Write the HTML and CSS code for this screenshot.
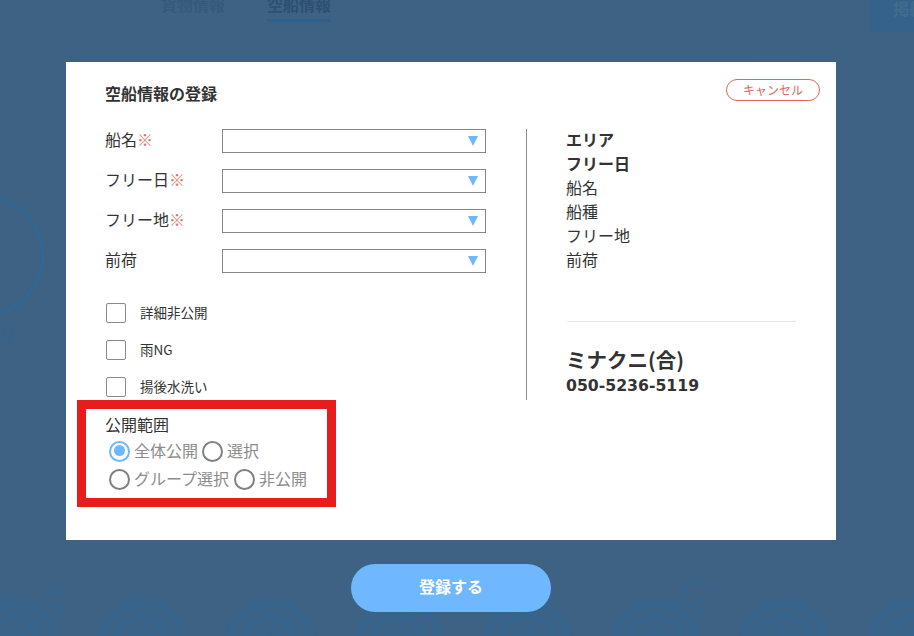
FILE: index.html
```html
<!DOCTYPE html>
<html lang="ja">
<head>
<meta charset="utf-8">
<title>空船情報の登録</title>
<link rel="stylesheet" href="styles.css">
</head>
<body>
<div class="page">
  <svg class="waves" width="914" height="96" viewBox="0 0 914 96" aria-hidden="true">
    <defs>
      <g id="wave">
        <circle cx="0" cy="0" r="45" fill="#3d6283"/>
        <g fill="none" stroke="#38648b">
          <circle cx="0" cy="0" r="39.5" stroke-width="11"/>
          <circle cx="0" cy="0" r="25.5" stroke-width="11"/>
          <circle cx="0" cy="0" r="11.5" stroke-width="10"/>
        </g>
      </g>
      <pattern id="back-row" width="128.5" height="96" patternUnits="userSpaceOnUse" x="-50.75" y="0">
        <use href="#wave" x="64.25" y="115"/>
      </pattern>
    </defs>
    <rect width="914" height="96" fill="url(#back-row)"/>
    <use href="#wave" x="13.5" y="102"/>
    <use href="#wave" x="142" y="102"/>
    <use href="#wave" x="270.5" y="102"/>
    <use href="#wave" x="399" y="102"/>
    <use href="#wave" x="527.5" y="102"/>
    <use href="#wave" x="656" y="102"/>
    <use href="#wave" x="784.5" y="102"/>
    <use href="#wave" x="913" y="102"/>
    <g fill="none" stroke="#38648b" stroke-width="4" stroke-linecap="round">
      <path d="M62 66 C50 68 46 58 50 50 C54 42 66 44 65 52 C64 57 57 57 57 53"/>
      <path d="M58 66 C60 72 64 76 60 80"/>
      <path d="M708 52 C706 40 692 38 686 46 C680 54 684 66 694 66 C700 66 703 60 699 56"/>
      <path d="M696 68 C702 72 708 76 710 72"/>
    </g>
    <g fill="#38648b">
      <circle cx="718" cy="44" r="1.5"/>
      <circle cx="738" cy="44" r="1.5"/>
      <circle cx="755" cy="30" r="1.5"/>
      <circle cx="724" cy="62" r="1.5"/>
      <circle cx="754" cy="58" r="1.5"/>
      <circle cx="78" cy="38" r="1.5"/>
      <circle cx="86" cy="56" r="1.5"/>
      <circle cx="332" cy="30" r="1.5"/>
    </g>
  </svg>
  <nav class="tabs">
    <span class="tab">貨物情報</span>
    <span class="tab tab-active">空船情報</span>
  </nav>
  <div class="post-btn">掲載</div>
  <div class="side-circle"></div>
  <div class="side-label">録</div>

  <section class="modal">
    <header class="modal-head">
      <h1 class="modal-title">空船情報の登録</h1>
      <button class="cancel" type="button">キャンセル</button>
    </header>
    <div class="modal-body">
      <form class="form-col">
        <div class="field"><label class="field-label">船名<span class="req">※</span></label><div class="select"><span class="caret"></span></div></div>
        <div class="field"><label class="field-label">フリー日<span class="req">※</span></label><div class="select"><span class="caret"></span></div></div>
        <div class="field"><label class="field-label">フリー地<span class="req">※</span></label><div class="select"><span class="caret"></span></div></div>
        <div class="field"><label class="field-label">前荷</label><div class="select"><span class="caret"></span></div></div>
        <div class="checks">
          <div class="check"><span class="box"></span><span class="check-text">詳細非公開</span></div>
          <div class="check"><span class="box"></span><span class="check-text">雨NG</span></div>
          <div class="check"><span class="box"></span><span class="check-text">揚後水洗い</span></div>
        </div>
      </form>
      <aside class="info-col">
        <div class="info-list">
          <p class="strong">エリア</p>
          <p class="strong">フリー日</p>
          <p>船名</p>
          <p>船種</p>
          <p>フリー地</p>
          <p>前荷</p>
        </div>
        <hr class="info-rule">
        <p class="company">ミナクニ(合)</p>
        <p class="phone">050-5236-5119</p>
      </aside>
    </div>
    <div class="scope">
      <div class="scope-title">公開範囲</div>
      <div class="radio-row">
        <span class="radio radio-on"></span><span class="radio-text">全体公開</span>
        <span class="radio"></span><span class="radio-text">選択</span>
      </div>
      <div class="radio-row">
        <span class="radio"></span><span class="radio-text radio-text-wide">グループ選択</span>
        <span class="radio"></span><span class="radio-text">非公開</span>
      </div>
    </div>
  </section>
  <button class="submit" type="button"><span class="submit-text">登録する</span></button>
</div>
</body>
</html>
```
FILE: styles.css
```css
* { box-sizing: border-box; }
html, body { margin: 0; padding: 0; }
body {
  font-family: "Noto Sans CJK JP", "DejaVu Sans", sans-serif;
  color: #333;
}
p, h1 { margin: 0; }

.page {
  position: relative;
  width: 914px;
  height: 636px;
  overflow: hidden;
  background: #3d6283;
  padding-top: 62px;
}
.waves { position: absolute; left: 0; bottom: 0; }

.tabs {
  position: absolute;
  top: -8px;
  left: 161px;
  display: flex;
  gap: 42px;
  font-size: 16px;
  line-height: 24px;
  font-weight: 700;
}
.tab { color: #37597a; height: 30px; }
.tab-active { color: #2e4f70; border-bottom: 3px solid #2f5f8c; }

.post-btn {
  position: absolute;
  top: -6px;
  left: 871px;
  width: 60px;
  height: 38px;
  background: #35628a;
  border-radius: 4px;
  color: #426c8e;
  font-size: 16px;
  font-weight: 700;
  line-height: 24px;
  padding: 2px 0 0 22px;
  white-space: nowrap;
}
.side-circle {
  position: absolute;
  left: -78px;
  top: 195px;
  width: 122px;
  height: 122px;
  border: 3px solid #336793;
  border-radius: 50%;
}
.side-label {
  position: absolute;
  left: -1px;
  top: 324px;
  width: 16px;
  overflow: hidden;
  direction: rtl;
  color: #37628a;
  font-size: 16px;
  line-height: 20px;
}

.modal {
  position: relative;
  width: 770px;
  height: 478px;
  margin-left: 66px;
  background: #fff;
}
.modal-head {
  display: flex;
  justify-content: space-between;
  align-items: flex-start;
  padding: 17px 16px 0 40px;
  height: 67px;
}
.modal-title {
  font-size: 16px;
  line-height: 28px;
  font-weight: 700;
  color: #333;
  margin-left: -1px;
}
.cancel {
  width: 94px;
  height: 22px;
  padding: 0;
  background: #fff;
  border: 1px solid #e0675c;
  border-radius: 11px;
  color: #e0675c;
  font-family: inherit;
  font-size: 12px;
  line-height: 20px;
}

.modal-body { display: flex; padding-left: 40px; }
.form-col { width: 380px; }
.field {
  display: flex;
  align-items: center;
  height: 24px;
  margin-bottom: 16px;
}
.field-label {
  width: 116px;
  font-size: 16px;
  line-height: 24px;
  color: #333;
  margin-top: -4px;
  text-indent: -1px;
}
.req { color: #e4736a; }
.select {
  position: relative;
  width: 264px;
  height: 24px;
  border: 1px solid #888;
  background: #fff;
}
.caret {
  position: absolute;
  right: 7px;
  top: 6px;
  width: 0;
  height: 0;
  border-left: 5.5px solid transparent;
  border-right: 5.5px solid transparent;
  border-top: 10px solid #6fb8ff;
}
.checks {
  display: flex;
  flex-direction: column;
  gap: 17px;
  padding-top: 14px;
}
.check {
  display: flex;
  align-items: center;
  gap: 14px;
  height: 20px;
  font-size: 13.5px;
  line-height: 20px;
  color: #333;
}
.check-text { margin-top: -2px; }
.box {
  width: 20px;
  height: 20px;
  border: 1px solid #8a8a8a;
  border-radius: 2px;
  background: #fff;
}

.info-col {
  width: 270px;
  height: 271px;
  margin-left: 40px;
  padding-left: 39px;
  border-left: 1px solid #8c8c8c;
}
.info-list {
  font-size: 16px;
  line-height: 24px;
  color: #333;
  margin-top: -2px;
}
.strong { font-weight: 700; }
.info-rule {
  width: 229px;
  height: 1px;
  margin: 50px 0 0 1px;
  border: 0;
  background: #e4e4e4;
}
.company {
  margin-top: 22px;
  font-size: 20.5px;
  line-height: 30px;
  font-weight: 700;
  color: #333;
}
.phone {
  font-family: "DejaVu Sans", sans-serif;
  font-size: 15.7px;
  line-height: 24px;
  font-weight: 700;
  color: #333;
}

.scope {
  position: absolute;
  left: 11px;
  top: 338px;
  width: 259px;
  height: 107px;
  border: 9px solid #e71c1c;
  padding: 3px 0 0 20px;
}
.scope-title {
  font-size: 16px;
  line-height: 24px;
  color: #333;
  margin-left: -1px;
}
.radio-row {
  display: flex;
  align-items: center;
  height: 28px;
  padding-left: 3px;
  font-size: 16px;
  color: #8c8c8c;
}
.radio {
  position: relative;
  width: 21px;
  height: 21px;
  border: 2.5px solid #808080;
  border-radius: 50%;
  background: #fff;
  flex: none;
  margin-top: 2px;
}
.radio-on { border-color: #6fb8ff; }
.radio-on::after {
  content: "";
  position: absolute;
  left: 2.5px;
  top: 2.5px;
  width: 11px;
  height: 11px;
  border-radius: 50%;
  background: #6fb8ff;
}
.radio-text {
  margin: 0 4px;
  line-height: 24px;
  white-space: nowrap;
}
.radio-text-wide { margin-right: 5px; }

.submit {
  display: block;
  width: 200px;
  height: 48px;
  margin: 24px 0 0 351px;
  padding: 0 0 4px;
  border: 0;
  border-radius: 24px;
  background: #6fb8ff;
  color: #fff;
  font-family: inherit;
  font-size: 16px;
  font-weight: 700;
  position: relative;
}
.submit-text { display: block; }
```
